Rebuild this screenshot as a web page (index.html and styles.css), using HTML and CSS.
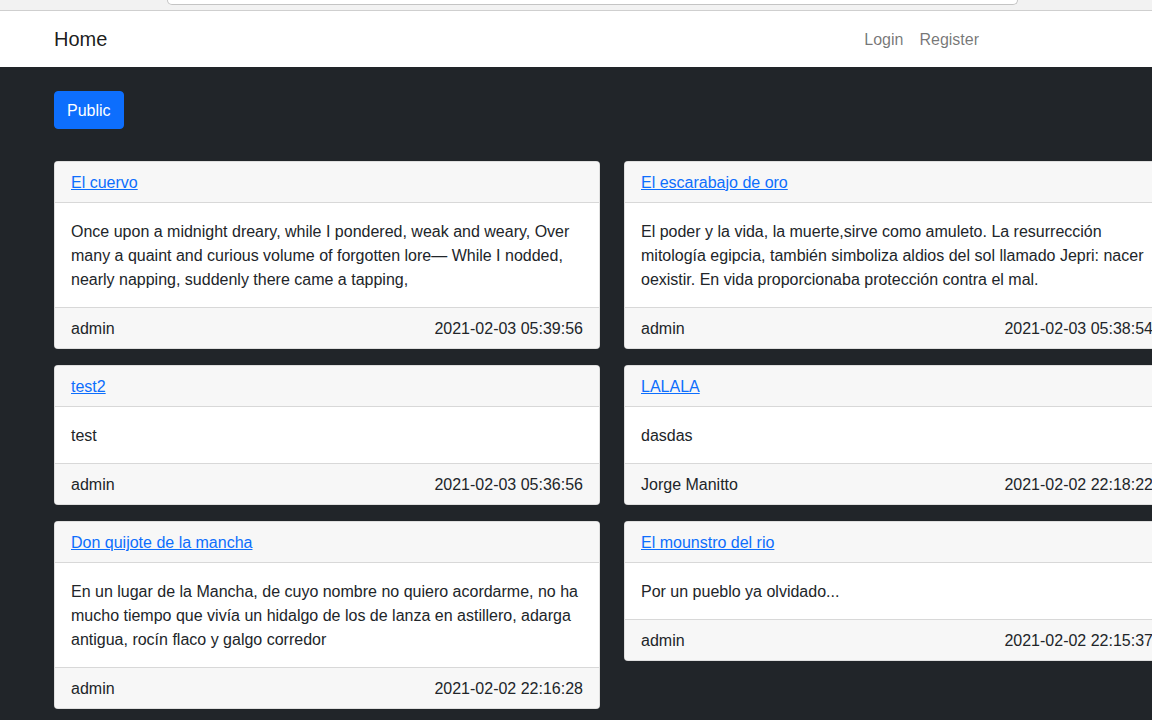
FILE: index.html
```html
<!DOCTYPE html>
<html lang="es">
<head>
<meta charset="utf-8">
<title>Home</title>
<link rel="stylesheet" href="styles.css">
</head>
<body>
<div class="chrome"><div class="addr"></div></div>
<nav class="navbar">
  <a class="brand" href="#">Home</a>
  <div class="nav-links">
    <a class="nav-link" href="#">Login</a>
    <a class="nav-link" href="#">Register</a>
  </div>
</nav>
<main class="main">
  <button class="btn">Public</button>
  <div class="grid">
    <div class="card">
      <div class="card-header"><a href="#">El cuervo</a></div>
      <div class="card-body">Once upon a midnight dreary, while I pondered, weak and weary, Over many a quaint and curious volume of forgotten lore— While I nodded, nearly napping, suddenly there came a tapping,</div>
      <div class="card-footer"><span>admin</span><span>2021-02-03 05:39:56</span></div>
    </div>
    <div class="card">
      <div class="card-header"><a href="#">El escarabajo de oro</a></div>
      <div class="card-body">El poder y la vida, la muerte,sirve como amuleto. La resurrección mitología egipcia, también simboliza aldios del sol llamado Jepri: nacer oexistir. En vida proporcionaba protección contra el mal.</div>
      <div class="card-footer"><span>admin</span><span>2021-02-03 05:38:54</span></div>
    </div>
    <div class="card">
      <div class="card-header"><a href="#">test2</a></div>
      <div class="card-body">test</div>
      <div class="card-footer"><span>admin</span><span>2021-02-03 05:36:56</span></div>
    </div>
    <div class="card">
      <div class="card-header"><a href="#">LALALA</a></div>
      <div class="card-body">dasdas</div>
      <div class="card-footer"><span>Jorge Manitto</span><span>2021-02-02 22:18:22</span></div>
    </div>
    <div class="card">
      <div class="card-header"><a href="#">Don quijote de la mancha</a></div>
      <div class="card-body">En un lugar de la Mancha, de cuyo nombre no quiero acordarme, no ha mucho tiempo que vivía un hidalgo de los de lanza en astillero, adarga antigua, rocín flaco y galgo corredor</div>
      <div class="card-footer"><span>admin</span><span>2021-02-02 22:16:28</span></div>
    </div>
    <div class="card">
      <div class="card-header"><a href="#">El mounstro del rio</a></div>
      <div class="card-body">Por un pueblo ya olvidado...</div>
      <div class="card-footer"><span>admin</span><span>2021-02-02 22:15:37</span></div>
    </div>
  </div>
</main>
</body>
</html>
```
FILE: styles.css
```css
* { box-sizing: border-box; }
html, body {
  margin: 0;
  padding: 0;
  overflow: hidden;
}
body {
  width: 1152px;
  height: 720px;
  background: #212529;
  font-family: "Liberation Sans", Arial, sans-serif;
  font-size: 16px;
  line-height: 24px;
  color: #212529;
}
.chrome {
  height: 11px;
  background: #f2f2f2;
  border-bottom: 1px solid #cfcfcf;
  padding-left: 167px;
}
.addr {
  width: 851px;
  height: 5px;
  background: #ffffff;
  border: 1px solid #c4c4c4;
  border-top: none;
  border-radius: 0 0 5px 5px;
}
.navbar {
  height: 56px;
  background: #ffffff;
  display: flex;
  align-items: center;
  padding: 0 0 0 54px;
}
.brand {
  font-size: 20px;
  line-height: 30px;
  color: rgba(0,0,0,.9);
  text-decoration: none;
  margin-right: auto;
}
.nav-links {
  display: flex;
  margin-right: 165px;
}
.nav-link {
  color: rgba(0,0,0,.55);
  text-decoration: none;
  padding: 9px 8px 7px;
}
.main {
  padding: 24px 0 0 54px;
}
.btn {
  display: block;
  font-family: inherit;
  font-size: 16px;
  line-height: 24px;
  color: #fff;
  background: #0d6efd;
  border: 1px solid #0d6efd;
  border-radius: 4px;
  padding: 7px 12px 5px;
  margin-bottom: 32px;
  cursor: pointer;
}
.grid {
  display: grid;
  grid-template-columns: 546px 546px;
  column-gap: 24px;
  row-gap: 16px;
  align-items: start;
}
.card {
  background: #fff;
  border: 1px solid rgba(0,0,0,.125);
  border-radius: 4px;
  overflow: hidden;
}
.card-header {
  background: #f7f7f7;
  padding: 9px 16px 7px;
  border-bottom: 1px solid rgba(0,0,0,.125);
}
.card-header a {
  color: #0d6efd;
  text-decoration: underline;
}
.card-body {
  padding: 17px 16px 15px;
}
.card-footer {
  background: #f7f7f7;
  padding: 9px 16px 7px;
  border-top: 1px solid rgba(0,0,0,.125);
  display: flex;
  justify-content: space-between;
}
```
